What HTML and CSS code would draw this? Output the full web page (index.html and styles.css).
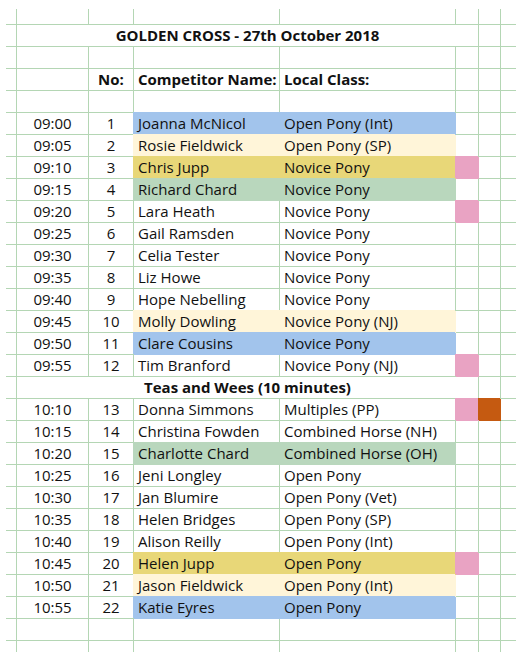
FILE: index.html
```html
<!DOCTYPE html>
<html lang="en">

<head>
    <meta charset="UTF-8">
    <meta name="viewport" content="width=device-width, initial-scale=1.0">
    <title>Golden Cross - Running Order</title>
    <link rel="stylesheet" href="styles.css">
</head>

<body>

    <div class="sheet">
        <div class="row top"><div></div><div></div><div></div><div></div><div></div><div></div><div></div><div></div></div>

        <div class="row"><div></div><div class="merged">GOLDEN CROSS - 27th October 2018</div><div></div><div></div></div>
        <div class="row"><div></div><div></div><div></div><div></div><div></div><div></div><div></div><div></div></div>
        <div class="row head"><div></div><div></div><div class="num">No:</div><div>Competitor Name:</div><div>Local Class:</div><div></div><div></div><div></div></div>
        <div class="row"><div></div><div></div><div></div><div></div><div></div><div></div><div></div><div></div></div>

        <!-- first half -->
        <div class="row"><div></div><div class="time">09:00</div><div class="num">1</div><div class="fill blue">Joanna McNicol</div><div class="fill blue">Open Pony (Int)</div><div></div><div></div><div></div></div>
        <div class="row"><div></div><div class="time">09:05</div><div class="num">2</div><div class="fill cream">Rosie Fieldwick</div><div class="fill cream">Open Pony (SP)</div><div></div><div></div><div></div></div>
        <div class="row"><div></div><div class="time">09:10</div><div class="num">3</div><div class="fill gold">Chris Jupp</div><div class="fill gold">Novice Pony</div><div class="fill pink"></div><div></div><div></div></div>
        <div class="row"><div></div><div class="time">09:15</div><div class="num">4</div><div class="fill green">Richard Chard</div><div class="fill green">Novice Pony</div><div></div><div></div><div></div></div>
        <div class="row"><div></div><div class="time">09:20</div><div class="num">5</div><div>Lara Heath</div><div>Novice Pony</div><div class="fill pink"></div><div></div><div></div></div>
        <div class="row"><div></div><div class="time">09:25</div><div class="num">6</div><div>Gail Ramsden</div><div>Novice Pony</div><div></div><div></div><div></div></div>
        <div class="row"><div></div><div class="time">09:30</div><div class="num">7</div><div>Celia Tester</div><div>Novice Pony</div><div></div><div></div><div></div></div>
        <div class="row"><div></div><div class="time">09:35</div><div class="num">8</div><div>Liz Howe</div><div>Novice Pony</div><div></div><div></div><div></div></div>
        <div class="row"><div></div><div class="time">09:40</div><div class="num">9</div><div>Hope Nebelling</div><div>Novice Pony</div><div></div><div></div><div></div></div>
        <div class="row"><div></div><div class="time">09:45</div><div class="num">10</div><div class="fill cream">Molly Dowling</div><div class="fill cream">Novice Pony (NJ)</div><div></div><div></div><div></div></div>
        <div class="row"><div></div><div class="time">09:50</div><div class="num">11</div><div class="fill blue">Clare Cousins</div><div class="fill blue">Novice Pony</div><div></div><div></div><div></div></div>
        <div class="row"><div></div><div class="time">09:55</div><div class="num">12</div><div>Tim Branford</div><div>Novice Pony (NJ)</div><div class="fill pink"></div><div></div><div></div></div>

        <div class="row"><div></div><div class="merged">Teas and Wees (10 minutes)</div><div></div><div></div></div>

        <!-- second half -->
        <div class="row"><div></div><div class="time">10:10</div><div class="num">13</div><div>Donna Simmons</div><div>Multiples (PP)</div><div class="fill pink"></div><div class="fill orange"></div><div></div></div>
        <div class="row"><div></div><div class="time">10:15</div><div class="num">14</div><div>Christina Fowden</div><div>Combined Horse (NH)</div><div></div><div></div><div></div></div>
        <div class="row"><div></div><div class="time">10:20</div><div class="num">15</div><div class="fill green">Charlotte Chard</div><div class="fill green">Combined Horse (OH)</div><div></div><div></div><div></div></div>
        <div class="row"><div></div><div class="time">10:25</div><div class="num">16</div><div>Jeni Longley</div><div>Open Pony</div><div></div><div></div><div></div></div>
        <div class="row"><div></div><div class="time">10:30</div><div class="num">17</div><div>Jan Blumire</div><div>Open Pony (Vet)</div><div></div><div></div><div></div></div>
        <div class="row"><div></div><div class="time">10:35</div><div class="num">18</div><div>Helen Bridges</div><div>Open Pony (SP)</div><div></div><div></div><div></div></div>
        <div class="row"><div></div><div class="time">10:40</div><div class="num">19</div><div>Alison Reilly</div><div>Open Pony (Int)</div><div></div><div></div><div></div></div>
        <div class="row"><div></div><div class="time">10:45</div><div class="num">20</div><div class="fill gold">Helen Jupp</div><div class="fill gold">Open Pony</div><div class="fill pink"></div><div></div><div></div></div>
        <div class="row"><div></div><div class="time">10:50</div><div class="num">21</div><div class="fill cream">Jason Fieldwick</div><div class="fill cream">Open Pony (Int)</div><div></div><div></div><div></div></div>
        <div class="row"><div></div><div class="time">10:55</div><div class="num">22</div><div class="fill blue">Katie Eyres</div><div class="fill blue">Open Pony</div><div></div><div></div><div></div></div>

        <div class="row"><div></div><div></div><div></div><div></div><div></div><div></div><div></div><div></div></div>
        <div class="row end"><div></div><div></div><div></div><div></div><div></div><div></div><div></div><div></div></div>
    </div>

</body>

</html>
```

FILE: styles.css
```css
body {
    margin: 0;
    background-color: #fff;
    font-family: "Open Sans", Arial, sans-serif;
    font-size: 15px;
    color: #111;
    overflow: hidden;
}

.sheet {
    padding: 9px 0 0 6px;
    width: 510px;
}

.row {
    display: grid;
    grid-template-columns: 11px 72px 45px 146px 176px 23px 22px 15px;
    height: 22px;
}

.row > div {
    box-sizing: border-box;
    border-right: 1px solid #b4d6b4;
    border-bottom: 1px solid #b4d6b4;
    padding: 1px 4px 0;
    line-height: 19px;
    white-space: nowrap;
}

.row > div:last-child {
    border-right: none;
}

.row.top {
    height: 16px;
}

.row.end {
    height: 11px;
}

.row.end > div {
    border-bottom: none;
}

.time,
.num {
    text-align: center;
}

.head > div,
.merged {
    font-weight: bold;
}

.merged {
    grid-column: span 5;
    text-align: center;
}

/* filled cells hide the grid lines round them */
.row > .fill {
    background-color: var(--fill);
    border-color: var(--fill);
    box-shadow: -1px -1px 0 var(--fill);
}

.blue { --fill: #a2c4ec; }
.cream { --fill: #fff5d9; }
.gold { --fill: #e8d778; }
.green { --fill: #b9d7bd; }
.pink { --fill: #e9a3c3; }
.orange { --fill: #c55a11; }
```
